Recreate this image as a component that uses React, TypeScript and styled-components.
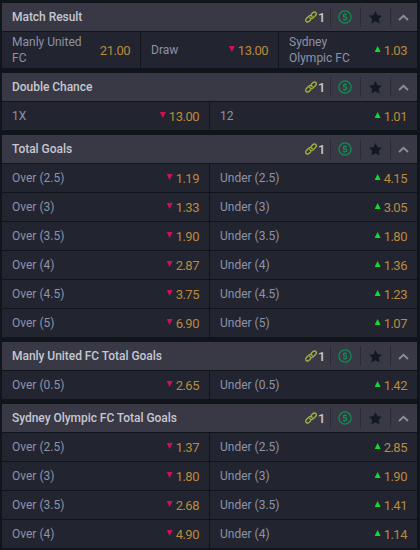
import React from 'react';
import styled, { createGlobalStyle } from 'styled-components';

const GlobalStyle = createGlobalStyle`
  * { box-sizing: border-box; }
  body {
    margin: 0;
    background: #10151c;
    font-family: Roboto, "Liberation Sans", sans-serif;
    font-size: 12px;
  }
`;

const Board = styled.main`
  display: flex;
  flex-direction: column;
  gap: 5px;
  width: 420px;
  height: 550px;
  padding: 3px 3px 0 2px;
  overflow: hidden;
`;

const Market = styled.section`
  display: flex;
  flex-direction: column;
  gap: 1px;
  flex: none;
`;

const Header = styled.header`
  display: flex;
  align-items: center;
  height: 28px;
  padding-left: 10px;
  background: #383945;
`;

const Title = styled.h2`
  flex: 1;
  margin: 0;
  font-size: 12px;
  line-height: 16px;
  font-weight: 500;
  letter-spacing: -0.04px;
  color: #c6c7d2;
`;

const LinkCount = styled.div`
  display: flex;
  align-items: center;
  width: 25px;
  color: #c6c8da;
  font-size: 13px;
  line-height: 14px;
  font-weight: 500;

  svg { display: block; margin-right: 1px; }
  span { padding-top: 2px; }
`;

const Tool = styled.button<{ $width: number }>`
  display: flex;
  align-items: center;
  justify-content: center;
  width: ${(p) => p.$width}px;
  height: 20px;
  padding: 0 1px 0 0;
  border: 0;
  border-left: 1px solid #2a2b35;
  background: none;
`;

const Row = styled.div<{ $columns: number; $tall?: boolean }>`
  display: grid;
  grid-template-columns: ${(p) => (p.$columns === 3 ? '138px 137px 138px' : '207px 207px')};
  column-gap: 1px;
  height: ${(p) => (p.$tall ? 36 : 28)}px;
`;

const Outcome = styled.div`
  display: flex;
  align-items: center;
  justify-content: space-between;
  padding: 0 10px;
  background: #22252f;
`;

const Label = styled.span<{ $narrow: boolean }>`
  max-width: ${(p) => (p.$narrow ? '78px' : 'none')};
  color: #8f92a9;
  line-height: 16px;
`;

const Odds = styled.span`
  display: flex;
  align-items: center;
  gap: 3px;
  padding-top: 2px;
  color: #b98a3e;
  font-size: 13px;
  letter-spacing: -0.5px;
  line-height: 16px;
`;

const Trend = styled.i<{ $up: boolean }>`
  width: 6px;
  height: 6px;
  margin-top: -4px;
  background: ${(p) => (p.$up ? '#12d930' : '#cf1151')};
  clip-path: ${(p) => (p.$up ? 'polygon(50% 0, 100% 100%, 0 100%)' : 'polygon(0 0, 100% 0, 50% 100%)')};
`;

const ChainIcon = () => (
  <svg width="12" height="12" viewBox="0 0 24 24" fill="none" stroke="#a4b13e" strokeWidth="2.7" strokeLinecap="round">
    <path d="M9.500 13.200c1.800 2.200 4.800 2.400 7 .3l4.600-4.500c1.800-1.800 2-4.300.5-5.800s-4.200-1.300-6 .5l-3 2.900" />
    <path d="M14.500 10.800c-1.800-2.200-4.800-2.400-7-.3L2.900 15c-1.800 1.800-2 4.300-.5 5.800s4.200 1.300 6-.5l3-2.900" />
  </svg>
);

const CashIcon = () => (
  <svg width="14" height="14" viewBox="0 0 14 14" fill="none" stroke="#118c51" strokeWidth="1.3">
    <circle cx="7" cy="7" r="6.1" />
    <path d="M9 4.600H5.600v2.200h1.700c2 0 2 2.700 0 2.700H5M7 3.300v1.300M7 9.500v1.300" />
  </svg>
);

const StarIcon = () => (
  <svg width="13" height="13" viewBox="0 0 24 24" fill="#131923">
    <path d="M12 0l3.800 7.700 8.200 1-6 5.700 1.600 8.600L12 18.900l-7.600 4.100L6 14.400 0 8.700l8.200-1z" />
  </svg>
);

const CollapseIcon = () => (
  <svg width="11" height="7" viewBox="0 0 11 7" fill="none" stroke="#8b8d98" strokeWidth="1.9">
    <path d="M1 6l4.500-4.300L10 6" />
  </svg>
);

type Item = [label: string, odds: string, trend?: 'up' | 'down'];

const lines = (values: [string, string, string][]): Item[][] =>
  values.map(([line, over, under]) => [
    [`Over (${line})`, over, 'down'],
    [`Under (${line})`, under, 'up'],
  ]);

const markets: { title: string; rows: Item[][] }[] = [
  { title: 'Match Result', rows: [[['Manly United FC', '21.00'], ['Draw', '13.00', 'down'], ['Sydney Olympic FC', '1.03', 'up']]] },
  { title: 'Double Chance', rows: [[['1X', '13.00', 'down'], ['12', '1.01', 'up']]] },
  {
    title: 'Total Goals',
    rows: lines([
      ['2.5', '1.19', '4.15'],
      ['3', '1.33', '3.05'],
      ['3.5', '1.90', '1.80'],
      ['4', '2.87', '1.36'],
      ['4.5', '3.75', '1.23'],
      ['5', '6.90', '1.07'],
    ]),
  },
  { title: 'Manly United FC Total Goals', rows: lines([['0.5', '2.65', '1.42']]) },
  {
    title: 'Sydney Olympic FC Total Goals',
    rows: lines([
      ['2.5', '1.37', '2.85'],
      ['3', '1.80', '1.90'],
      ['3.5', '2.68', '1.41'],
      ['4', '4.90', '1.14'],
    ]),
  },
];

export default function App() {
  return (
    <>
      <GlobalStyle />
      <Board>
        {markets.map((market) => (
          <Market key={market.title}>
            <Header>
              <Title>{market.title}</Title>
              <LinkCount><ChainIcon /><span>1</span></LinkCount>
              <Tool $width={30} aria-label="Cash out"><CashIcon /></Tool>
              <Tool $width={30} aria-label="Favourite"><StarIcon /></Tool>
              <Tool $width={27} aria-label="Collapse"><CollapseIcon /></Tool>
            </Header>
            {market.rows.map((row) => (
              <Row key={row[0][0]} $columns={row.length} $tall={row.length === 3}>
                {row.map(([label, odds, trend]) => (
                  <Outcome key={label}>
                    <Label $narrow={row.length === 3}>{label}</Label>
                    <Odds>
                      {trend && <Trend $up={trend === 'up'} />}
                      {odds}
                    </Odds>
                  </Outcome>
                ))}
              </Row>
            ))}
          </Market>
        ))}
      </Board>
    </>
  );
}
